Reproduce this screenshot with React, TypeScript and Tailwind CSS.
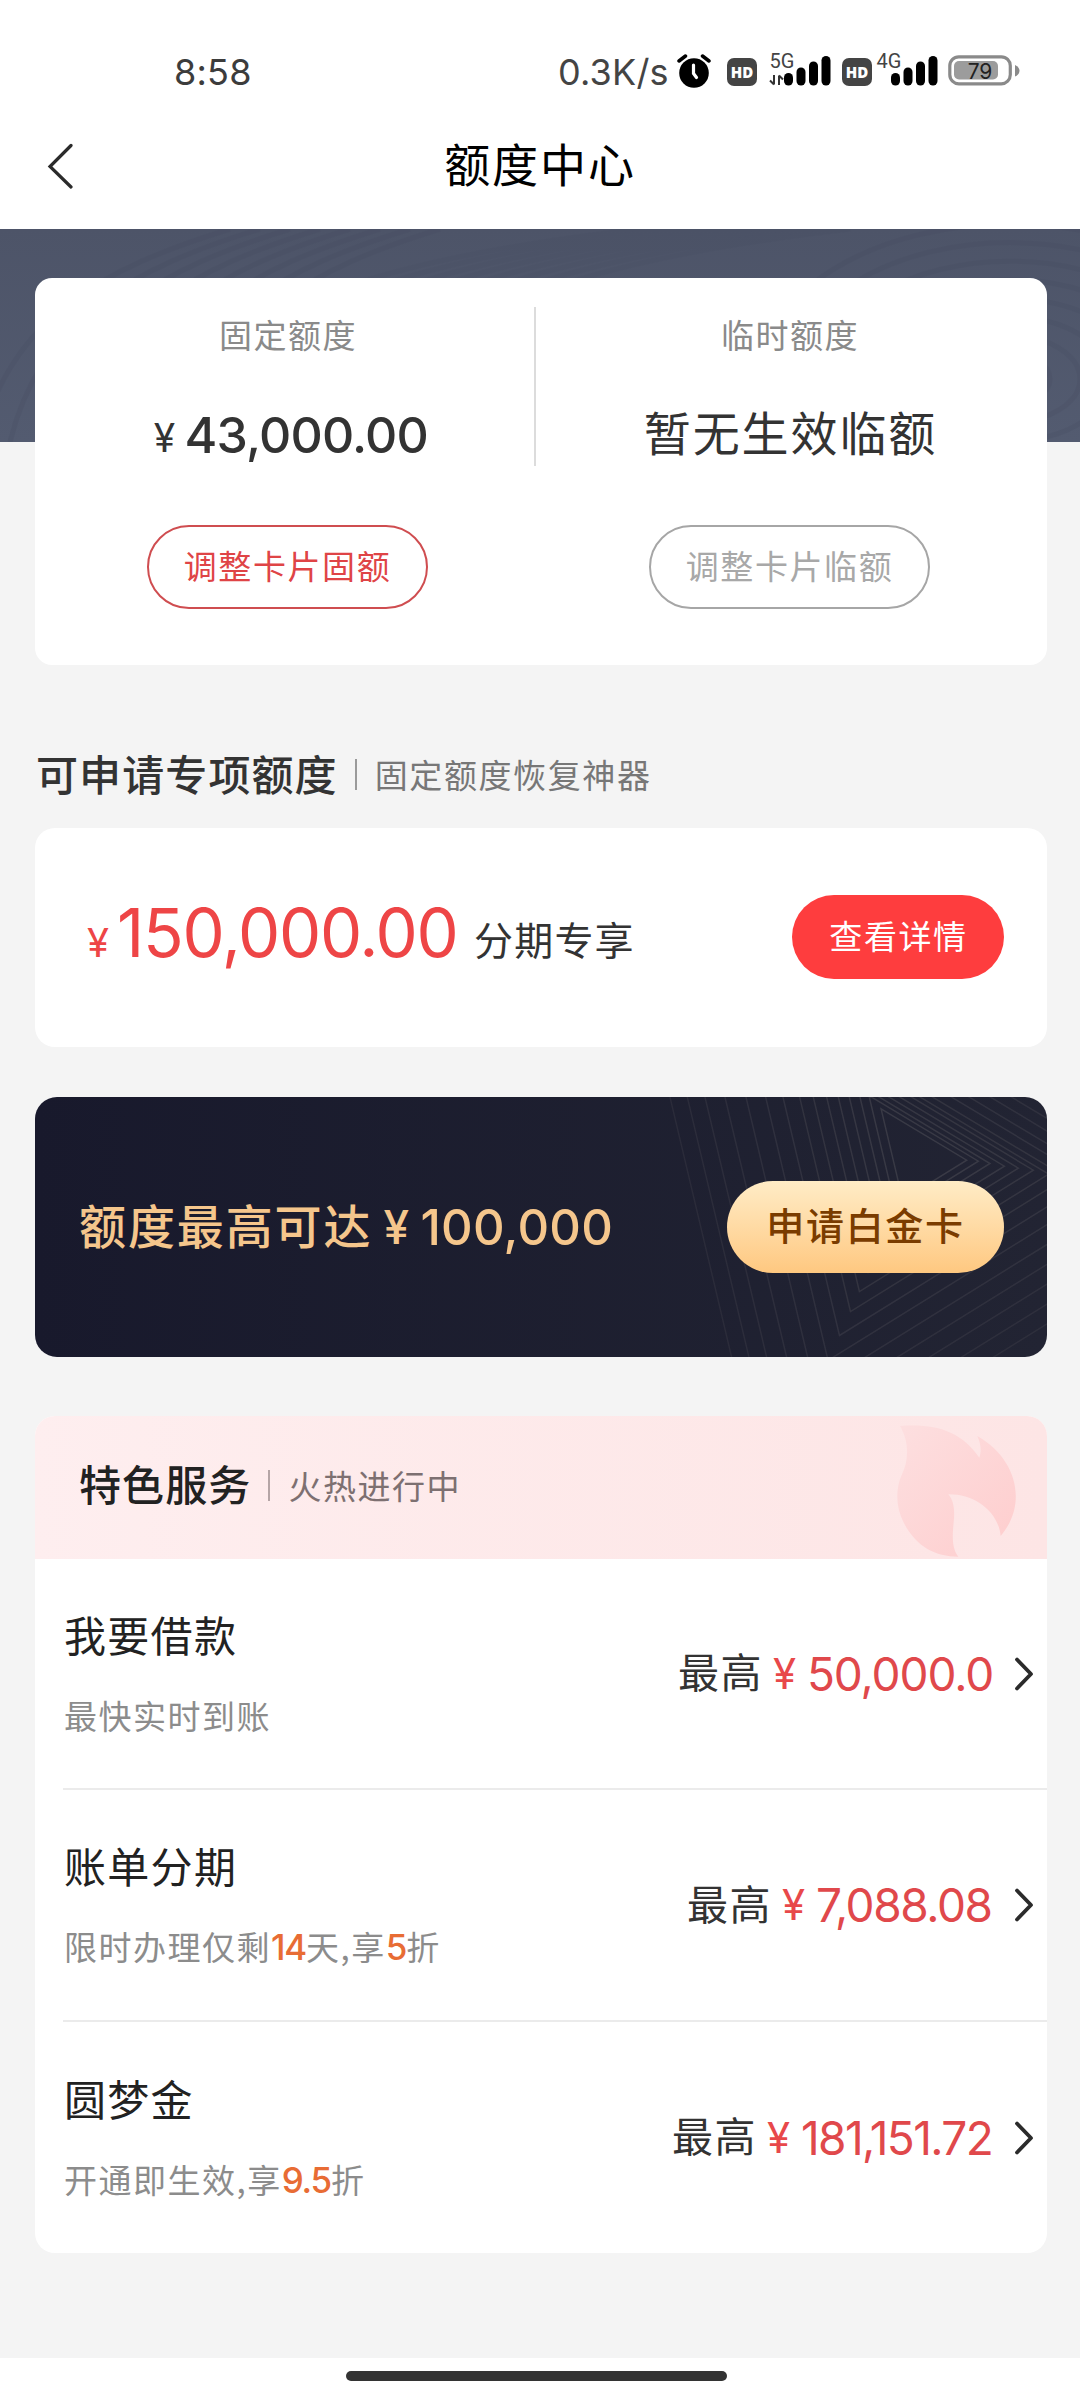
import type { ReactNode } from "react";

const services: { title: string; sub: ReactNode; amount: string; amountClass: string; rowClass: string }[] = [
  { title: "我要借款", sub: "最快实时到账", amount: "50,000.0", amountClass: "tracking-[-1.1px] w-[183px]", rowClass: "h-[231px]" },
  {
    title: "账单分期",
    sub: (
      <>
        限时办理仅剩<Hot>14</Hot>天,享<Hot>5</Hot>折
      </>
    ),
    amount: "7,088.08",
    amountClass: "tracking-[-1.4px] w-[174px]",
    rowClass: "h-[232px]",
  },
  {
    title: "圆梦金",
    sub: (
      <>
        开通即生效,享<Hot>9.5</Hot>折
      </>
    ),
    amount: "181,151.72",
    amountClass: "tracking-[-1.6px] w-[189px]",
    rowClass: "h-[231px]",
  },
];

function Hot({ children }: { children: ReactNode }) {
  return <span className="font-['Inter'] text-[35px] font-medium tracking-[-1.2px] text-[#e86c34]">{children}</span>;
}

function Yen({ className }: { className: string }) {
  return <span className={"font-['Inter'] flex shrink-0 justify-center tracking-normal " + className}>¥</span>;
}

function HdBadge() {
  return (
    <span className="flex h-[28px] w-[30px] items-center justify-center rounded-[7px] bg-[#444] font-['Open_Sans'] text-[15px] font-extrabold leading-none text-white">
      HD
    </span>
  );
}

function Signal({ label, arrows }: { label: string; arrows?: boolean }) {
  return (
    <svg className="overflow-visible" width="62" height="34" viewBox="0 0 62 34">
      <text x="0.500" y="14.500" fontFamily="Roboto" fontSize="20" fill="#444">
        {label}
      </text>
      {arrows && (
        <g stroke="#333" strokeWidth="2" fill="none">
          <path d="M5 22v9.500M5 31.500l-4-4M10 32v-9.500M10 22.500l4 4" />
        </g>
      )}
      <g fill="#000">
        <rect x="15" y="20" width="9" height="12.500" rx="4.500" />
        <rect x="27.500" y="14.500" width="9" height="18" rx="4.500" />
        <rect x="40" y="8.500" width="9" height="24" rx="4.500" />
        <rect x="52.500" y="3" width="9" height="29.500" rx="4.500" />
      </g>
    </svg>
  );
}

function StatusBar() {
  return (
    <div className="flex h-[102px] items-start pt-[52px]">
      <div className="w-[386px] pl-[174px] font-['Inter'] text-[36px] leading-[40px] tracking-[0.2px] text-[#3c3c3c]">8:58</div>
      <div className="ml-[172px] w-[111px] whitespace-nowrap font-['Inter'] text-[36px] leading-[40px] tracking-[0.2px] text-[#444]">0.3K/s</div>
      <svg className="ml-[8px] mt-[2px]" width="34" height="35" viewBox="0 0 34 35">
        <circle cx="17" cy="19" r="14.800" fill="#000" />
        <path d="M2 7 8.500 2M32 7 25.500 2" stroke="#000" strokeWidth="3.500" strokeLinecap="round" />
        <path d="M16.500 11v8.500l3 4" stroke="#fff" strokeWidth="3.200" strokeLinecap="round" fill="none" />
      </svg>
      <div className="ml-[16px] mt-[6px]">
        <HdBadge />
      </div>
      <div className="ml-[12px] mt-px">
        <Signal label="5G" arrows />
      </div>
      <div className="ml-[11px] mt-[6px]">
        <HdBadge />
      </div>
      <div className="ml-[4px] mt-px">
        <Signal label="4G" />
      </div>
      <svg className="ml-[10px] mt-[3px]" width="73" height="31" viewBox="0 0 73 31">
        <rect x="1.800" y="1.800" width="60.500" height="27" rx="9" fill="none" stroke="#8a8a8a" strokeWidth="3.200" />
        <rect x="6" y="6" width="44" height="18.500" rx="5" fill="#9c9c9c" />
        <path d="M67 10c6 2.500 6 9 0 11.500z" fill="#8a8a8a" />
        <text x="32" y="24" textAnchor="middle" fontFamily="Inter" fontSize="21" fill="#222">
          79
        </text>
      </svg>
    </div>
  );
}

function TitleBar() {
  return (
    <div className="grid h-[127px] grid-cols-3 items-start">
      <svg className="ml-[46px] mt-[41px]" width="28" height="46" viewBox="0 0 28 46">
        <path d="M25 2.500 4 23.500 25 44" fill="none" stroke="#2b2b2b" strokeWidth="3.200" strokeLinecap="round" />
      </svg>
      <h1 className="mt-[30px] text-center text-[46px] font-normal leading-[60px] tracking-[1.900px] text-black">额度中心</h1>
    </div>
  );
}

function BandPattern() {
  const radii = [40, 70, 100, 130, 160, 190, 220, 250];
  return (
    <svg className="absolute inset-0" width="1080" height="213" viewBox="0 0 1080 213">
      <defs>
        <linearGradient id="band" x1="0" y1="0" x2="0" y2="1">
          <stop offset="0" stopColor="#4d5468" />
          <stop offset="1" stopColor="#535b70" />
        </linearGradient>
      </defs>
      <rect width="1080" height="213" fill="url(#band)" />
      <g fill="none" stroke="#454b60" strokeWidth="5" opacity="0.22">
        {radii.map((r) => (
          <ellipse key={r} cx="1010" cy="150" rx={r} ry={r * 0.62} />
        ))}
        {radii.map((r) => (
          <path key={r} d={"M" + (r - 60) + " 213C" + (r - 30) + " 90 " + (r + 60) + " 40 " + (r + 190) + " 0"} />
        ))}
        {radii.map((r) => (
          <path key={r} d={"M" + (r + 300) + " 60C" + (r + 370) + " 35 " + (r + 470) + " 15 " + (r + 600) + " 0"} opacity="0.6" />
        ))}
      </g>
    </svg>
  );
}

function LimitCard() {
  return (
    <section className="relative mt-[49px] ml-[35px] flex h-[387px] w-[1012px] rounded-[17px] bg-white">
      <div className="flex w-[499px] flex-col items-center pl-[5px]">
        <div className="mt-[34px] pl-[2px] text-[33px] leading-[44px] tracking-[1.500px] text-[#8a8a8a]">固定额度</div>
        <div className="mt-[51px] flex h-[60px] items-end pl-[6px] text-[#333]">
          <Yen className="mr-[8px] w-[24px] text-[39px] leading-[58px]" />
          <span className="w-[243px] whitespace-nowrap font-['Inter'] text-[50px] font-medium leading-[64px] tracking-[-0.800px]">43,000.00</span>
        </div>
        <button className="mt-[58px] h-[84px] w-[281px] rounded-full border-2 border-[#cf4d50] pb-[3px] pl-px text-[33px] leading-none tracking-[1.600px] text-[#df4446]">
          调整卡片固额
        </button>
      </div>
      <div className="mt-[29px] h-[159px] w-[2px] bg-[#dcdcdc]" />
      <div className="flex w-[507px] flex-col items-center pr-px">
        <div className="mt-[34px] pl-[2px] text-[33px] leading-[44px] tracking-[1.500px] text-[#8a8a8a]">临时额度</div>
        <div className="mt-[45px] pl-[3px] text-[47px] leading-[60px] tracking-[1.900px] text-[#333]">暂无生效临额</div>
        <button className="mt-[64px] h-[84px] w-[281px] rounded-full border-2 border-[#a6a6a6] pb-[3px] pl-px text-[33px] leading-none tracking-[1.600px] text-[#a8a8a8]">
          调整卡片临额
        </button>
      </div>
    </section>
  );
}

const chevronLefts = [835, 808, 780, 748, 715, 680, 640, 599, 549, 497, 438, 375, 315, 262, 210];
const chevronTips = [
  [1100, 240], [1135, 243], [1170, 250], [1213, 258], [1255, 264], [1300, 270], [1346, 282], [1400, 292],
  [1470, 300], [1540, 310], [1620, 320], [1700, 330], [1780, 340], [1860, 350], [1940, 360],
];

function chevronPath(i: number) {
  const left = chevronLefts[i];
  const [tx, ty] = chevronTips[i];
  const by = (ty + 0.62 * (tx - left + 0.237 * 51)) / (1 + 0.62 * 0.237);
  const bx = left + 0.237 * (by - 51);
  const ay = (ty - 0.6 * (tx - left + 0.237 * 51)) / (1 - 0.6 * 0.237);
  const ax = left + 0.237 * (ay - 51);
  return "M" + ax + " " + ay + "L" + tx + " " + ty + "L" + bx + " " + by + "Z";
}

function PlatinumBanner() {
  return (
    <section className="relative ml-[35px] mt-[50px] flex h-[260px] w-[1012px] items-center overflow-hidden rounded-[22px] bg-linear-to-r from-[#18192c] to-[#222433]">
      <svg className="absolute right-0 top-0" width="447" height="260" viewBox="0 51 1341 779">
        <g fill="none" stroke="#fff3e0" strokeWidth="4.500">
          {chevronLefts.map((left, i) => (
            <path key={left} d={chevronPath(i)} opacity={0.11 - i * 0.004} />
          ))}
        </g>
      </svg>
      <div className="relative flex w-[692px] items-center pl-[44px] text-[#f5c68c]">
        <span className="-mt-[7px] text-[47px] font-medium leading-[60px] tracking-[1.900px]">额度最高可达</span>
        <Yen className="ml-[9px] mr-[9px] w-[30px] text-[46px] font-medium leading-[60px]" />
        <span className="whitespace-nowrap pt-px font-['Inter'] text-[49px] font-medium leading-[60px] tracking-[0.300px]">100,000</span>
      </div>
      <button className="relative h-[92px] w-[277px] rounded-full bg-linear-to-b from-[#ffecc6] to-[#fec880] pb-[6px] text-[38px] font-medium leading-none tracking-[1.700px] text-[#7a3c00]">
        申请白金卡
      </button>
    </section>
  );
}

function Flame() {
  return (
    <svg className="absolute right-0 top-0" width="160" height="143" viewBox="861 78 480 429">
      <defs>
        <linearGradient id="flame" x1="0" y1="0" x2="1" y2="1">
          <stop offset="0" stopColor="#fddfe0" />
          <stop offset="1" stopColor="#fecdcd" />
        </linearGradient>
      </defs>
      <path
        fill="url(#flame)"
        d="M900 108C930 160 925 215 905 255C885 300 888 355 912 400C950 470 1005 500 1075 500C1050 470 1060 415 1062 385C1064 355 1060 330 1045 313C1125 312 1195 365 1202 438C1285 340 1250 205 1132 138C1144 165 1144 185 1138 203C1085 125 1010 100 900 108Z"
      />
    </svg>
  );
}

export default function App() {
  return (
    <div className="flex h-[2400px] w-[1080px] flex-col overflow-hidden bg-[#f4f4f4] font-['Noto_Sans_CJK_SC',sans-serif]">
      <header className="bg-white">
        <StatusBar />
        <TitleBar />
      </header>

      <div className="relative h-[436px]">
        <div className="absolute inset-x-0 top-0 h-[213px]">
          <BandPattern />
        </div>
        <div className="flex">
          <LimitCard />
        </div>
      </div>

      <div className="mt-[79px] flex h-[60px] items-center pl-[36px]">
        <h2 className="-mt-[2px] text-[42px] font-medium leading-[60px] tracking-[1.100px] text-[#333]">可申请专项额度</h2>
        <div className="ml-[17px] h-[31px] w-[2px] bg-[#9a9a9a]" />
        <span className="ml-[18px] text-[33px] leading-[60px] tracking-[1.600px] text-[#777]">固定额度恢复神器</span>
      </div>

      <section className="ml-[35px] mt-[24px] flex h-[219px] w-[1012px] items-center rounded-[20px] bg-white">
        <div className="flex w-[757px] items-baseline pl-[51px] text-[#ee4546]">
          <Yen className="mr-[7px] w-[24px] text-[40px] leading-[80px]" />
          <span className="w-[345px] whitespace-nowrap font-['Inter'] text-[67px] leading-[80px] tracking-[-1.300px]">150,000.00</span>
          <span className="relative -top-[2px] ml-[12px] text-[39px] leading-[76px] tracking-[1.200px] text-[#333]">分期专享</span>
        </div>
        <button className="mb-[2px] h-[84px] w-[212px] rounded-full bg-[#fe3d3e] pb-[3px] pl-px text-[33px] leading-none tracking-[1.600px] text-white">
          查看详情
        </button>
      </section>

      <PlatinumBanner />

      <section className="ml-[35px] mt-[59px] w-[1012px] overflow-hidden rounded-[20px] bg-white">
        <div className="relative flex h-[143px] items-center bg-linear-to-r from-[#feeeef] to-[#fde5e5] pb-[5px] pl-[44px]">
          <Flame />
          <h2 className="-mt-[4px] text-[42px] font-medium leading-[60px] tracking-[1.100px] text-[#222]">特色服务</h2>
          <div className="ml-[17px] h-[31px] w-[2px] bg-[#b5a5a6]" />
          <span className="-mt-px ml-[18px] text-[33px] leading-[60px] tracking-[1.500px] text-[#7d7071]">火热进行中</span>
        </div>
        {services.map((s, i) => (
          <div
            key={s.title}
            className={"ml-[28px] flex items-center justify-between pr-[13px] " + s.rowClass + (i < 2 ? " border-b-2 border-[#ebebeb]" : "")}
          >
            <div className="pb-[4px] pl-px">
              <h3 className="text-[42px] font-normal leading-[60px] tracking-[1.300px] text-[#222]">{s.title}</h3>
              <p className="mt-[26px] h-[50px] whitespace-nowrap text-[33px] leading-[50px] tracking-[1.500px] text-[#8c8c8c]">{s.sub}</p>
            </div>
            <div className="flex items-center">
              <span className="-mt-[7px] text-[41px] leading-[60px] tracking-[1.500px] text-[#333]">最高</span>
              <Yen className="ml-[9px] mr-[10px] w-[25px] text-[42px] leading-[60px] text-[#e8484a]" />
              <span className={"whitespace-nowrap font-['Inter'] text-[46px] leading-[60px] text-[#e0484b] " + s.amountClass}>{s.amount}</span>
              <svg className="ml-[24px]" width="20" height="36" viewBox="0 0 20 36">
                <path d="M3 3.500 17 18 3 32.500" fill="none" stroke="#2b2b2b" strokeWidth="3.800" strokeLinecap="round" strokeLinejoin="round" />
              </svg>
            </div>
          </div>
        ))}
      </section>

      <footer className="mt-auto flex h-[42px] justify-center bg-white pr-[7px] pt-[13px]">
        <div className="h-[10px] w-[381px] rounded-full bg-[#333]" />
      </footer>
    </div>
  );
}
